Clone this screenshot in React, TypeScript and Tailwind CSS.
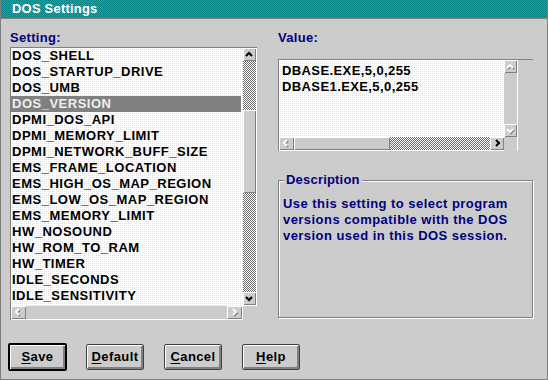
const settings = [
  'DOS_SHELL',
  'DOS_STARTUP_DRIVE',
  'DOS_UMB',
  'DOS_VERSION',
  'DPMI_DOS_API',
  'DPMI_MEMORY_LIMIT',
  'DPMI_NETWORK_BUFF_SIZE',
  'EMS_FRAME_LOCATION',
  'EMS_HIGH_OS_MAP_REGION',
  'EMS_LOW_OS_MAP_REGION',
  'EMS_MEMORY_LIMIT',
  'HW_NOSOUND',
  'HW_ROM_TO_RAM',
  'HW_TIMER',
  'IDLE_SECONDS',
  'IDLE_SENSITIVITY',
]

const points = {
  up: '1,6 4,3 7,6',
  down: '1,3 4,6 7,3',
  left: '5,1 2,4 5,7',
  right: '3,1 6,4 3,7',
}

function Chevron({ dir, off }: { dir: keyof typeof points; off?: boolean }) {
  return (
    <svg width="9" height="9" viewBox="0 0 9 9">
      {off && (
        <polyline points={points[dir]} transform="translate(1,1)" fill="none" stroke="#808080" strokeWidth="2" />
      )}
      <polyline points={points[dir]} fill="none" stroke={off ? '#ffffff' : '#000000'} strokeWidth="2" />
    </svg>
  )
}

function ScrollBtn({ dir, off, className }: { dir: keyof typeof points; off?: boolean; className: string }) {
  return (
    <div
      className={`${className} shrink-0 flex items-center justify-center bg-[#cccccc] shadow-[inset_1px_1px_0_#ffffff,inset_-1px_-1px_0_#808080]`}
    >
      <Chevron dir={dir} off={off} />
    </div>
  )
}

// 1px checker for the scroll tracks, 1-in-4 yellow dots for the edit fields
const checker =
  'bg-[image:repeating-conic-gradient(#ffffff_0_25%,#6a6a6a_0_50%)] bg-[length:2px_2px]'
const thumb = 'bg-[#cccccc] shadow-[inset_1px_1px_0_#ffffff,inset_-1px_-1px_0_#808080]'
const dots =
  'bg-[image:linear-gradient(90deg,#ffffff_1px,transparent_1px),linear-gradient(#ffffff_1px,#ffff00_1px)] bg-[length:2px_2px]'

function Button({ label, rest, main }: { label: string; rest: string; main?: boolean }) {
  return (
    <button
      className={`flex items-center justify-center bg-[#cccccc] rounded-[2px] text-black font-bold text-[13px] leading-4 tracking-[0.4px] shadow-[inset_1px_1px_0_#ffffff,inset_-2px_-2px_0_#808080] ${
        main ? 'w-[59px] h-[28px] border-2 border-black' : 'w-[58px] h-[26px] border border-[#404040]'
      }`}
    >
      <span className="underline underline-offset-2">{label}</span>
      {rest}
    </button>
  )
}

export default function App() {
  return (
    <div className="w-[548px] h-[380px] bg-[#cccccc] border-x border-b border-[#808080] flex flex-col font-['Liberation_Sans',Arial,sans-serif] text-[13px] leading-4 font-bold">
      <div className="h-[19px] shrink-0 border-b border-[#808080] bg-[image:repeating-conic-gradient(#008080_0_25%,#808080_0_50%)] bg-[length:2px_2px] pl-[11px] pt-[1px] text-white tracking-[0.2px]">
        DOS Settings
      </div>

      <div className="flex pl-[9px] pt-[11px] gap-[21px]">
        <div className="w-[247px] flex flex-col">
          <div className="h-4 text-[#000080] tracking-[0.3px]">Setting:</div>
          <div className="mt-[1px] border-t border-l border-[#808080] flex flex-col">
            <div className="flex h-[258px]">
              <div className={`w-[232px] ${dots}`}>
                {settings.map((s) => (
                  <div
                    key={s}
                    className={`h-4 pl-[1px] whitespace-nowrap tracking-[0.5px] ${
                      s === 'DOS_VERSION' ? 'bg-[#808080] text-[#eeeeee] mr-[2px]' : 'text-black'
                    }`}
                  >
                    {s}
                  </div>
                ))}
              </div>
              <div className="w-[14px] flex flex-col border-r border-b border-white">
                <ScrollBtn dir="up" className="h-[13px]" />
                <div className={`h-[49px] ${checker}`} />
                <div className={`h-[83px] ${thumb}`} />
                <div className={`flex-1 ${checker}`} />
                <ScrollBtn dir="down" className="h-[13px]" />
              </div>
            </div>
            <div className="flex">
              <div className="w-[232px] h-[14px] flex border-r border-b border-white">
                <ScrollBtn dir="left" off className="w-[15px]" />
                <div className="flex-1" />
                <ScrollBtn dir="right" off className="w-[15px]" />
              </div>
            </div>
          </div>
        </div>

        <div className="w-[255px] flex flex-col">
          <div className="h-4 text-[#000080] tracking-[0.3px]">Value:</div>
          <div className="mt-[13px] border-t border-l border-[#808080] flex flex-col">
            <div className="flex h-[77px]">
              <div className={`w-[225px] ${dots} pl-[3px] pt-[3px] text-black tracking-[0.4px]`}>
                <div>DBASE.EXE,5,0,255</div>
                <div>DBASE1.EXE,5,0,255</div>
              </div>
              <div className="w-[14px] flex flex-col border-r border-white">
                <ScrollBtn dir="up" off className="h-[13px]" />
                <div className="flex-1" />
                <ScrollBtn dir="down" off className="h-[13px]" />
              </div>
            </div>
            <div className="flex">
              <div className="w-[225px] h-[14px] flex border-b border-white">
                <ScrollBtn dir="left" off className="w-[15px]" />
                <div className={`w-[96px] ${thumb}`} />
                <div className={`flex-1 ${checker}`} />
                <ScrollBtn dir="right" className="w-[14px]" />
              </div>
              <div className="w-[14px] border-r border-white" />
            </div>
          </div>

          <fieldset className="mt-[21px] h-[146px] border border-[#808080] shadow-[1px_1px_0_#ffffff,inset_1px_1px_0_#ffffff] pl-[4px] pt-[8px] text-[#000080]">
            <legend className="ml-[1px] px-[2px] bg-[#cccccc] tracking-[0.2px]">Description</legend>
            <div className="tracking-[0.45px]">
              Use this setting to select program
              <br />
              versions compatible with the DOS
              <br />
              version used in this DOS session.
            </div>
          </fieldset>
        </div>
      </div>

      <div className="flex items-center pl-[7px] mt-[23px]">
        <Button label="S" rest="ave" main />
        <div className="w-[19px]" />
        <Button label="D" rest="efault" />
        <div className="w-[20px]" />
        <Button label="C" rest="ancel" />
        <div className="w-[20px]" />
        <Button label="H" rest="elp" />
      </div>
    </div>
  )
}
